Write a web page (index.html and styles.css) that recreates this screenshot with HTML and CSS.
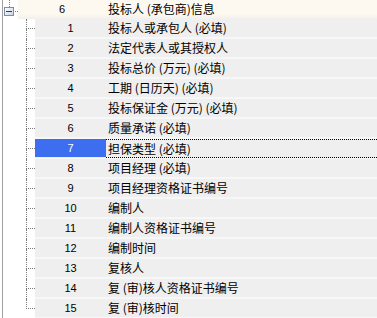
FILE: index.html
```html
<!DOCTYPE html>
<html lang="zh-CN">
<head>
  <meta charset="UTF-8">
  <meta name="viewport" content="width=device-width, initial-scale=1.0">
  <title>投标人信息</title>
  <link rel="stylesheet" href="styles.css">
</head>
<body>
  <div class="tree">
    <div class="row head">
      <svg class="expander" width="15" height="19" viewBox="0 0 15 19">
        <defs>
          <linearGradient id="boxfill" x1="0" y1="0" x2="1" y2="1">
            <stop offset="0" stop-color="#ffffff"/>
            <stop offset="1" stop-color="#c6d2e2"/>
          </linearGradient>
        </defs>
        <rect x="6" y="0" width="1" height="1" fill="#808080"/>
        <rect x="6" y="2" width="1" height="1" fill="#808080"/>
        <rect x="6" y="4" width="1" height="1" fill="#808080"/>
        <rect x="6" y="6" width="1" height="1" fill="#808080"/>
        <rect x="1.5" y="7.5" width="9" height="8" fill="url(#boxfill)" stroke="#7a8fae"/>
        <rect x="3" y="11" width="6" height="1" fill="#1c3f8c"/>
        <rect x="12" y="11" width="1" height="1" fill="#808080"/>
        <rect x="14" y="11" width="1" height="1" fill="#808080"/>
      </svg>
      <span class="cells">
        <span class="num">6</span>
        <span class="label">投标人 (承包商)信息</span>
      </span>
    </div>

    <div class="row">
      <span class="branch"><i class="branch-top"></i><i class="branch-bottom"></i></span>
      <span class="cells"><span class="num">1</span><span class="label">投标人或承包人 (必填)</span></span>
    </div>
    <div class="row">
      <span class="branch"><i class="branch-top"></i><i class="branch-bottom"></i></span>
      <span class="cells"><span class="num">2</span><span class="label">法定代表人或其授权人</span></span>
    </div>
    <div class="row">
      <span class="branch"><i class="branch-top"></i><i class="branch-bottom"></i></span>
      <span class="cells"><span class="num">3</span><span class="label">投标总价 (万元) (必填)</span></span>
    </div>
    <div class="row">
      <span class="branch"><i class="branch-top"></i><i class="branch-bottom"></i></span>
      <span class="cells"><span class="num">4</span><span class="label">工期 (日历天) (必填)</span></span>
    </div>
    <div class="row">
      <span class="branch"><i class="branch-top"></i><i class="branch-bottom"></i></span>
      <span class="cells"><span class="num">5</span><span class="label">投标保证金 (万元) (必填)</span></span>
    </div>
    <div class="row">
      <span class="branch"><i class="branch-top"></i><i class="branch-bottom"></i></span>
      <span class="cells"><span class="num">6</span><span class="label">质量承诺 (必填)</span></span>
    </div>
    <div class="row selected">
      <span class="branch"><i class="branch-top"></i><i class="branch-bottom"></i></span>
      <span class="cells"><span class="num">7</span><span class="label">担保类型 (必填)</span></span>
    </div>
    <div class="row">
      <span class="branch"><i class="branch-top"></i><i class="branch-bottom"></i></span>
      <span class="cells"><span class="num">8</span><span class="label">项目经理 (必填)</span></span>
    </div>
    <div class="row">
      <span class="branch"><i class="branch-top"></i><i class="branch-bottom"></i></span>
      <span class="cells"><span class="num">9</span><span class="label">项目经理资格证书编号</span></span>
    </div>
    <div class="row">
      <span class="branch"><i class="branch-top"></i><i class="branch-bottom"></i></span>
      <span class="cells"><span class="num">10</span><span class="label">编制人</span></span>
    </div>
    <div class="row">
      <span class="branch"><i class="branch-top"></i><i class="branch-bottom"></i></span>
      <span class="cells"><span class="num">11</span><span class="label">编制人资格证书编号</span></span>
    </div>
    <div class="row">
      <span class="branch"><i class="branch-top"></i><i class="branch-bottom"></i></span>
      <span class="cells"><span class="num">12</span><span class="label">编制时间</span></span>
    </div>
    <div class="row">
      <span class="branch"><i class="branch-top"></i><i class="branch-bottom"></i></span>
      <span class="cells"><span class="num">13</span><span class="label">复核人</span></span>
    </div>
    <div class="row">
      <span class="branch"><i class="branch-top"></i><i class="branch-bottom"></i></span>
      <span class="cells"><span class="num">14</span><span class="label">复 (审)核人资格证书编号</span></span>
    </div>
    <div class="row last">
      <span class="branch"><i class="branch-top"></i><i class="branch-bottom"></i></span>
      <span class="cells"><span class="num">15</span><span class="label">复 (审)核时间</span></span>
    </div>
  </div>
</body>
</html>
```

FILE: styles.css
```css
html, body {
  margin: 0;
  padding: 0;
  background: #fff;
  overflow: hidden;
}
.tree {
  margin-left: 2px;
  border-left: 1px solid #a0a0a0;
  height: 318px;
  font-family: "Noto Sans CJK SC", "Noto Sans", sans-serif;
  font-size: 12px;
  color: #000;
}
.row {
  display: flex;
  height: 20px;
}
.row.head {
  height: 19px;
}
.expander {
  display: block;
  flex: none;
}
.cells {
  display: flex;
  flex: 1;
  height: 20px;
  box-sizing: border-box;
  background: #efefef;
  border-bottom: 2px solid #f7f7f7;
}
.head .cells {
  height: 19px;
  border-bottom: none;
  background: linear-gradient(#fdf9f1 0, #fdf9f1 14px, #f1f0ee 19px);
}
.num {
  width: 71px;
  flex: none;
  text-align: center;
  font-family: "Liberation Sans", Arial, sans-serif;
  font-size: 11px;
  line-height: 18px;
}
.head .num {
  width: 88px;
}
.label {
  flex: 1;
  padding-left: 2px;
  line-height: 18px;
  white-space: pre;
}
.branch {
  width: 32px;
  flex: none;
  display: flex;
  flex-direction: column;
  background: #fff;
}
.branch i {
  display: block;
  margin-left: 23px;
  width: 8px;
  border-left: 1px dotted #7a7a7a;
}
.branch .branch-top {
  height: 9px;
  border-bottom: 1px dotted #7a7a7a;
}
.branch .branch-bottom {
  flex: 1;
}
.last .branch .branch-bottom {
  border-left-color: transparent;
}
.selected .cells {
  border-bottom-width: 1px;
}
.selected .num {
  height: 18px;
  background: #3c6eef;
  color: #fff;
}
.selected .label {
  height: 19px;
  box-sizing: border-box;
  border-top: 1px dotted #000;
  border-bottom: 1px dotted #000;
  line-height: 17px;
}
```
